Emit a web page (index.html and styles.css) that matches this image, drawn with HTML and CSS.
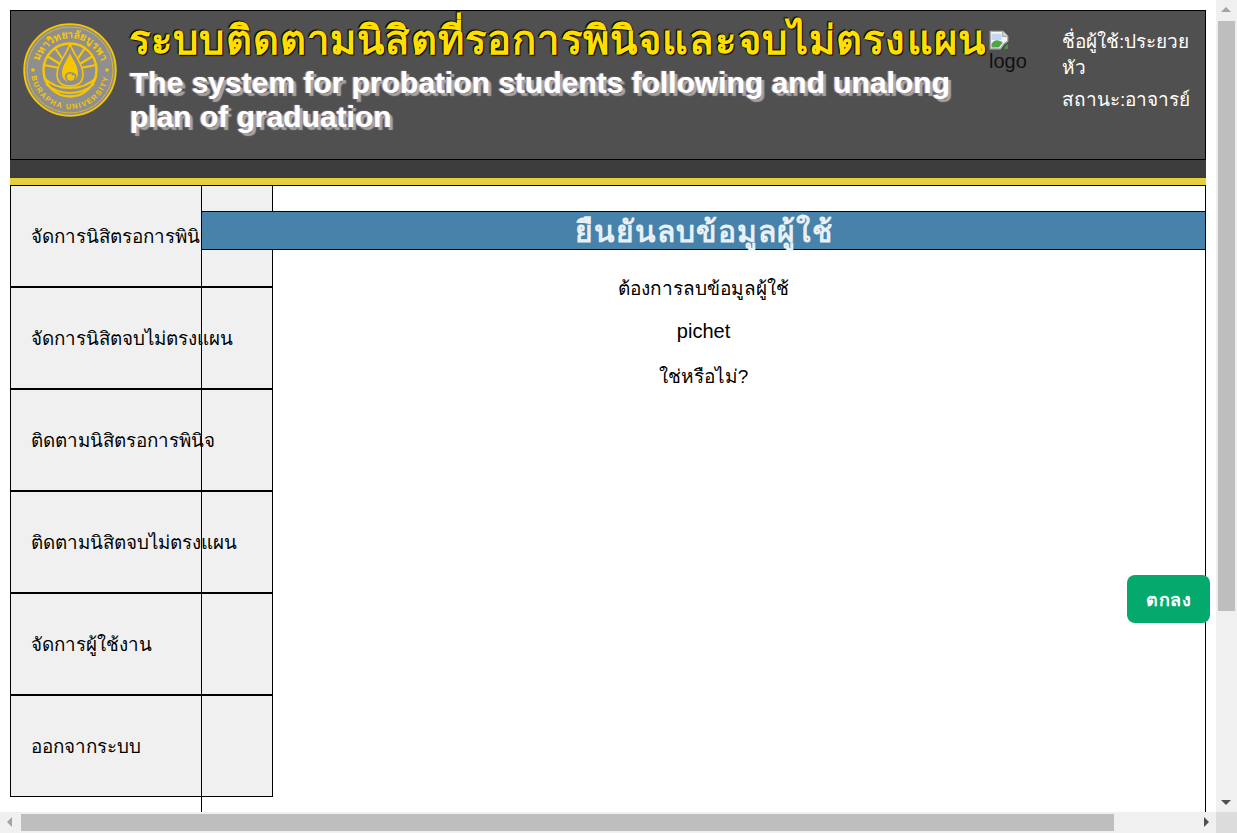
FILE: index.html
```html
<!DOCTYPE html>
<html>

  <head>
    <meta charset="utf-8">
    <title>ยืนยันลบข้อมูลผู้ใช้</title>
    <link rel="stylesheet" href="styles.css">
  </head>

  <body>
    <div class="window">
      <div class="page">
        <div class="header">
          <svg class="seal" viewBox="0 0 94 94">
            <defs>
              <path id="seal-top" d="M15 47a32 32 0 0 1 64 0"></path>
              <path id="seal-bottom" d="M8 47a39 39 0 0 0 78 0"></path>
            </defs>
            <circle cx="47" cy="47" r="45.8" fill="#8f8f8f" stroke="#f7c600" stroke-width="1.8"></circle>
            <circle cx="47" cy="47" r="43" fill="none" stroke="#f7c600" stroke-width="0.7"></circle>
            <text class="seal-thai"><textPath href="#seal-top" startOffset="50%" text-anchor="middle">มหาวิทยาลัยบูรพา</textPath></text>
            <text class="seal-latin"><textPath href="#seal-bottom" startOffset="50%" text-anchor="middle">BURAPHA UNIVERSITY</textPath></text>
            <circle cx="10" cy="47" r="1.8" fill="#f7c600"></circle>
            <circle cx="84" cy="47" r="1.8" fill="#f7c600"></circle>
            <circle cx="47" cy="47" r="26.5" fill="none" stroke="#f7c600" stroke-width="2.4"></circle>
            <path d="M47 47 21 42M47 47 24 33M47 47 32 25M47 47 62 25M47 47 70 33M47 47 73 42" stroke="#f7c600" stroke-width="2.2"></path>
            <path d="M47 20c2 10 13 20 13 31 0 8-5 12-13 12s-13-4-13-12c0-11 11-21 13-31z" fill="#8f8f8f" stroke="#f7c600" stroke-width="1.6"></path>
            <path d="M47 30c2 6 8 12 8 20 0 6-4 9-8 9s-8-3-8-9c0-8 6-14 8-20z" fill="#f7c600"></path>
            <path d="M51 51c-5-3-9 0-8 4s7 5 9 1-1-6-3-4" fill="none" stroke="#8f8f8f" stroke-width="1.6"></path>
            <path d="M21 55c8 8 16 10 26 10s18-2 26-10M23 61c7 6 15 9 24 9s17-3 24-9" fill="none" stroke="#f7c600" stroke-width="2"></path>
          </svg>

          <div class="titles">
            <div class="title-th">ระบบติดตามนิสิตที่รอการพินิจและจบไม่ตรงแผน</div>
            <div class="title-en">The system for probation students following and unalong plan of graduation</div>
          </div>

          <div class="broken-img">
            <svg class="broken-icon" viewBox="0 0 16 16">
              <path d="M1 1h10l4 4v4l-3 2-3 4H1z" fill="#f4f4f4" stroke="#a9a9a9"></path>
              <path d="M11 1v4h4" fill="#dcdcdc" stroke="#a9a9a9"></path>
              <path d="M2 3h8v5H2z" fill="#c4d8f5"></path>
              <path d="M2 14v-3c3-4 6-3 9-1l-3 4z" fill="#4ea54a"></path>
              <path d="M12 15l3-4v4z" fill="#4ea54a"></path>
            </svg>
            <span>logo</span>
          </div>

          <div class="user-info">
            <div>ชื่อผู้ใช้:ประยวย หัว</div>
            <div class="user-role">สถานะ:อาจารย์</div>
          </div>
        </div>
        <div class="header-strip"></div>

        <div class="layout">
          <div class="sidenav">
            <a class="nav-item">จัดการนิสิตรอการพินิจ</a>
            <a class="nav-item">จัดการนิสิตจบไม่ตรงแผน</a>
            <a class="nav-item">ติดตามนิสิตรอการพินิจ</a>
            <a class="nav-item">ติดตามนิสิตจบไม่ตรงแผน</a>
            <a class="nav-item">จัดการผู้ใช้งาน</a>
            <a class="nav-item">ออกจากระบบ</a>
          </div>

          <div class="content">
            <h2 class="content-title">ยืนยันลบข้อมูลผู้ใช้</h2>
            <p class="confirm-line">ต้องการลบข้อมูลผู้ใช้</p>
            <p class="confirm-line confirm-name">pichet</p>
            <p class="confirm-line">ใช่หรือไม่?</p>
            <button class="ok-btn">ตกลง</button>
          </div>
        </div>
      </div>

      <div class="scroll-v">
        <span class="arrow arrow-up"></span>
        <div class="thumb-v"></div>
        <span class="arrow arrow-down"></span>
      </div>
      <div class="scroll-h">
        <span class="arrow arrow-left"></span>
        <div class="thumb-h"></div>
        <span class="arrow arrow-right"></span>
      </div>
      <div class="scroll-corner"></div>
    </div>
  </body>

</html>
```

FILE: styles.css
```css
html,
body {
  margin: 0;
  height: 100%;
  overflow: hidden;
}

body {
  font-family: "Liberation Sans", Arial, "Noto Sans", sans-serif;
  font-size: 18px;
  color: #000;
  background-color: #fff;
}

.window {
  display: grid;
  grid-template-columns: 1216px 21px;
  grid-template-rows: 812px 21px;
  height: 833px;
}

.page {
  padding: 10px 10px 0 10px;
  overflow: hidden;
}

/* header */
.header {
  display: flex;
  box-sizing: border-box;
  height: 150px;
  background-color: #505050;
  border: 1px solid #000;
}

.seal {
  flex: none;
  width: 94px;
  height: 94px;
  margin: 12px 12px 0 12px;
}

.seal-thai {
  font-size: 10.5px;
  font-weight: bold;
  fill: #f7c600;
}

.seal-latin {
  font-size: 7.5px;
  font-weight: bold;
  fill: #f7c600;
  letter-spacing: 1.4px;
}

.titles {
  flex: none;
  width: 860px;
}

.title-th {
  margin-top: 6px;
  font-size: 40px;
  font-weight: bold;
  line-height: 46px;
  letter-spacing: 1.15px;
  white-space: nowrap;
  color: #ffdf00;
  text-shadow: 1px 1px 1px #000, -1px -1px 1px #000;
}

.title-en {
  margin-top: 3px;
  padding-left: 1px;
  font-size: 30px;
  font-weight: bold;
  line-height: 34px;
  color: #fff;
  text-shadow: 3px 3px 1px #aaa3a3, -1px 0 1px #c9c9ff;
}

.broken-img {
  flex: none;
  width: 73px;
  margin-top: 19px;
  font-size: 20px;
  line-height: 22px;
  color: #111;
}

.broken-icon {
  display: block;
  width: 20px;
  height: 20px;
}

.user-info {
  flex: none;
  width: 132px;
  margin-top: 18px;
  font-size: 19px;
  line-height: 26px;
  color: #fff;
}

.user-role {
  margin-top: 6px;
}

.header-strip {
  height: 18px;
  background-color: #3c3c3c;
  border-bottom: 7px solid #e6cf3c;
}

/* body of the page */
.layout {
  display: flex;
  min-height: 640px;
  border-top: 1px solid #000;
}

.sidenav {
  flex: none;
  width: 263px;
}

.nav-item {
  display: flex;
  align-items: center;
  box-sizing: border-box;
  height: 102px;
  padding: 0 20px;
  font-size: 18.8px;
  white-space: nowrap;
  background-color: #f0f0f0;
  border: 1px solid #000;
}

.nav-item:first-child {
  height: 101px;
  border-top: 0;
}

.content {
  position: relative;
  display: flex;
  flex-direction: column;
  flex: 1;
  margin-left: -72px;
  border-left: 1px solid #000;
  border-right: 1px solid #000;
  text-align: center;
}

.content-title {
  margin: 25px 0 0 0;
  height: 39px;
  box-sizing: border-box;
  font-size: 30px;
  line-height: 39px;
  letter-spacing: 1px;
  color: #e8f0f6;
  background-color: #4682a9;
  border-top: 1px solid #000;
  border-bottom: 1px solid #000;
}

.confirm-line {
  margin: 0;
  height: 44px;
  font-size: 19px;
  line-height: 44px;
}

.confirm-line:first-of-type {
  margin-top: 17px;
}

.confirm-name {
  font-size: 20px;
  line-height: 41px;
}

.ok-btn {
  align-self: flex-end;
  width: 83px;
  height: 48px;
  margin: 176px -5px 0 0;
  padding: 0;
  font-family: inherit;
  font-size: 18px;
  font-weight: bold;
  letter-spacing: 0.5px;
  color: #fff;
  background-color: #04aa6d;
  border: 0;
  border-radius: 8px;
}

/* scrollbars */
.scroll-v,
.scroll-h {
  position: relative;
  background-color: #f0f0f0;
}

.scroll-corner {
  background-color: #dcdcdc;
}

.thumb-v {
  width: 17px;
  height: 590px;
  margin: 21px 0 0 2px;
  background-color: #bebebe;
}

.thumb-h {
  width: 1093px;
  height: 17px;
  margin: 2px 0 0 21px;
  background-color: #bebebe;
}

.arrow {
  position: absolute;
  width: 0;
  height: 0;
  border: 5px solid transparent;
}

.arrow-up {
  top: 2px;
  left: 5px;
  border-bottom-color: #a3a3a3;
}

.arrow-down {
  bottom: 2px;
  left: 5px;
  border-top-color: #505050;
}

.arrow-left {
  left: 2px;
  top: 5px;
  border-right-color: #a3a3a3;
}

.arrow-right {
  right: 2px;
  top: 5px;
  border-left-color: #505050;
}
```
